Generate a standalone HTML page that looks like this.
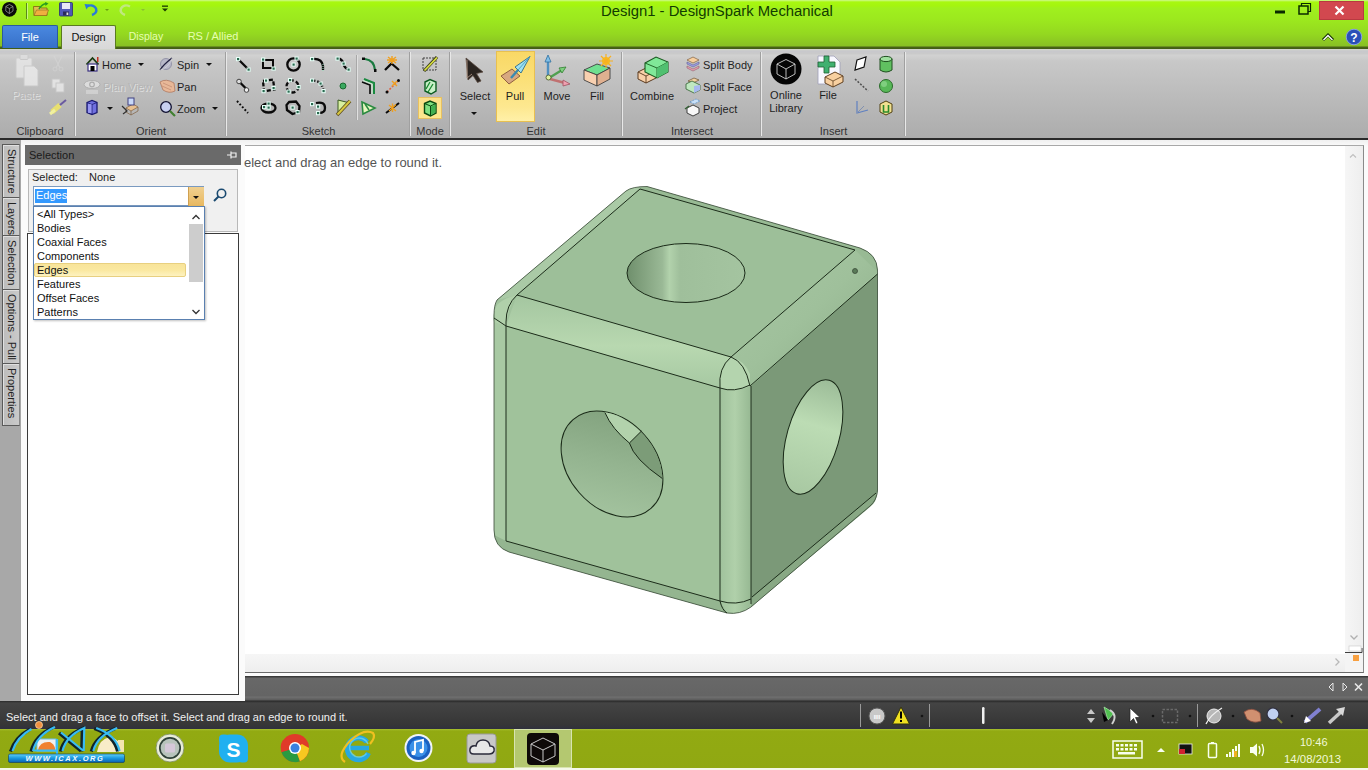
<!DOCTYPE html>
<html><head><meta charset="utf-8">
<style>
*{margin:0;padding:0;box-sizing:border-box}
html,body{width:1368px;height:770px;overflow:hidden;background:#fff;font-family:"Liberation Sans",sans-serif;font-size:11px;color:#1e1e1e}
.a{position:absolute}
.t{position:absolute;white-space:nowrap;line-height:1}
svg{position:absolute;overflow:visible}
#title{left:0;top:0;width:1368px;height:49px;background:linear-gradient(#d0f890 0px,#a8f810 2px,#a4f410 6px,#a0f01e 8px,#9ce81e 20px,#94d820 34px,#88c024 46px,#4a6418 47px,#3e5a14 49px)}
#ribbon{left:0;top:49px;width:1368px;height:90px;background:linear-gradient(#d4d8cc 0,#c8c8cc 2px,#cacaca 5px,#d2d2d2 6px,#c8c8c8 12px,#bcbcbc 45px,#acacac 89px)}
#rline{left:0;top:138px;width:1368px;height:2px;background:#2a2a2a}
#main{left:0;top:140px;width:1368px;height:561px;background:linear-gradient(#f0f0f0 0,#f8f8f8 5px,#fbfbfb 6px,#fbfbfb 100%)}
#ltabs{left:0;top:140px;width:21px;height:561px;background:#a8a8a8}
#panel{left:21px;top:146px;width:224px;height:530px;background:#fbfbfb}
#view{left:245px;top:145px;width:1119px;height:528px;background:#fff;border-top:1px solid #a8a8a8;border-right:1px solid #8a8a8a;border-bottom:1px solid #6a6a6a}
#dpanel{left:245px;top:676px;width:1123px;height:25px;background:linear-gradient(#3a3a3a,#3a3a3a 1px,#686868 2px,#646464 20px,#707070 21px,#5a5a5a 24px,#2a2a2a 25px)}
#status{left:0;top:701px;width:1368px;height:28px;background:linear-gradient(#2a2a2a,#444 2px,#3e3e3e 40%,#363636 85%,#30303e 100%)}
#task{left:0;top:729px;width:1368px;height:41px;background:linear-gradient(#a8c030,#92aa12 2px,#90a812)}
.sep{position:absolute;top:52px;width:2px;height:84px;border-left:1px solid #a0a0a0;border-right:1px solid #e8e8e8}
.gl{position:absolute;top:125px;font-size:11px;color:#333;text-align:center;white-space:nowrap;line-height:13px}
.tab{position:absolute;top:25px;height:23px;font-size:11px;line-height:23px;text-align:center}
.ltab{position:absolute;left:2px;width:18px;background:linear-gradient(90deg,#bcbcbc,#cacaca);border:1px solid #5a5a5a;border-right:1px solid #888;box-shadow:inset 1px 1px 0 #e0e0e0}
.ltab span{position:absolute;left:2px;top:4px;writing-mode:vertical-rl;font-size:11px;line-height:13px;color:#222;white-space:nowrap}
.dd{position:absolute;width:0;height:0;border-left:3px solid transparent;border-right:3px solid transparent;border-top:3px solid #111}
</style></head><body>
<div id="title" class="a"></div>
<div id="ribbon" class="a"></div>
<div id="rline" class="a"></div>
<div id="main" class="a"></div>
<div id="ltabs" class="a"></div>
<div id="panel" class="a"></div>
<div id="view" class="a"></div>
<div id="dpanel" class="a"></div>
<div id="status" class="a"></div>
<div id="task" class="a"></div>

<!-- TITLE -->
<div class="t" style="left:601px;top:3.5px;font-size:14.85px;color:#123c00;line-height:15px">Design1 - DesignSpark Mechanical</div>

<!-- QAT icons -->
<svg style="left:0;top:0" width="180" height="24">
 <circle cx="9.4" cy="9.3" r="7.4" fill="#0a0a0a"/>
 <g stroke="#bbb" stroke-width="0.6" fill="none"><path d="M9.4 4.5 L13 6.5 L13 11 L9.4 13.5 L5.8 11 L5.8 6.5 Z M9.4 8.5 L9.4 13.5 M9.4 8.5 L13 6.5 M9.4 8.5 L5.8 6.5"/></g>
 <line x1="26.5" y1="3" x2="26.5" y2="19" stroke="#5a8a18" stroke-width="1"/>
 <line x1="27.5" y1="3" x2="27.5" y2="19" stroke="#c8f880" stroke-width="1"/>
 <path d="M33.5 6.5 L40 6.5 L41 8 L47 8 L47 15.5 L34 15.5 Z" fill="#e0c050" stroke="#806010" stroke-width="0.8"/>
 <path d="M34 15.5 L36.5 10 L48.5 10 L46.5 15.5 Z" fill="#f0b040" stroke="#906818" stroke-width="0.6"/>
 <path d="M39 9 Q42 4 46.5 3.5" stroke="#2a9a20" stroke-width="1.6" fill="none"/>
 <path d="M45 2 L48.5 3.5 L45.5 6" fill="#2a9a20"/>
 <rect x="59.5" y="2.5" width="13" height="13.5" rx="1" fill="#5058b8" stroke="#2a3070" stroke-width="0.8"/>
 <rect x="62" y="3" width="8" height="6" fill="#e8e8f8"/>
 <rect x="63" y="11.5" width="6" height="4" fill="#2a2a5a"/>
 <rect x="66.5" y="12.5" width="1.8" height="2.5" fill="#ddd"/>
 <path d="M87 6.5 Q93 3.5 96 8.5 Q97.5 13 92 15" stroke="#2a7ad8" stroke-width="2.4" fill="none"/>
 <path d="M84.5 4 L89.5 4.5 L86.5 9.5 Z" fill="#2a7ad8"/>
 <path d="M105 9 L109 9 L107 11 Z" fill="#6aa010"/>
 <path d="M130 6.5 Q124 3.5 121 8.5 Q119.5 13 125 15" stroke="#c0e880" stroke-width="2.4" fill="none"/>
 <path d="M141 9 L145 9 L143 11 Z" fill="#8ac030"/>
 <rect x="162" y="5.5" width="6" height="1.3" fill="#1a3a00"/>
 <path d="M162 8.5 L168 8.5 L165 11.5 Z" fill="#1a3a00"/>
</svg>
<!-- window buttons -->
<div class="a" style="left:1319px;top:1px;width:45px;height:19px;background:#d2484f;border:1px solid #b83a40"></div>
<svg style="left:1270px;top:0" width="98" height="50">
 <rect x="5" y="10.5" width="10" height="3" fill="#0a2a00"/>
 <rect x="29" y="6" width="9" height="8" fill="none" stroke="#0a2a00" stroke-width="1.5"/>
 <path d="M31.5 6 L31.5 3.5 L40.5 3.5 L40.5 11.5 L38 11.5" fill="none" stroke="#0a2a00" stroke-width="1.2"/>
 <path d="M65.5 6.5 L73.5 14.5 M73.5 6.5 L65.5 14.5" stroke="#fff" stroke-width="2.2"/>
 <path d="M53 40 L58 35 L63 40" fill="none" stroke="#123000" stroke-width="3"/>
 <path d="M53.5 40 L58 35.5 L62.5 40" fill="none" stroke="#fff" stroke-width="1.4"/>
 <circle cx="84" cy="37" r="7.8" fill="#2a50b8" stroke="#8aa0e0" stroke-width="1"/>
 <text x="84" y="41.5" font-family="Liberation Sans" font-weight="bold" font-size="12" fill="#fff" text-anchor="middle">?</text>
</svg>
<!-- TABS -->
<div class="tab" style="left:2px;width:56px;background:linear-gradient(#4a88e0,#3670c8);color:#fff;border:1px solid #2a5aa0;border-bottom:none;border-radius:2px 2px 0 0">File</div>
<div class="tab" style="left:61px;width:55px;height:24px;background:linear-gradient(#e4e4e4,#d8d8d8);color:#111;border:1px solid #5a7a20;border-bottom:none;border-radius:2px 2px 0 0">Design</div>
<div class="tab" style="left:118px;width:56px;color:#e6ffb0;font-size:10.5px">Display</div>
<div class="tab" style="left:182px;width:62px;color:#e6ffb0">RS / Allied</div>

<div class="a" style="left:496px;top:51px;width:39px;height:71px;background:linear-gradient(#f9d866,#fbe078 40%,#fde890 80%,#fff0a8);border:1px solid #e8c050"></div>
<div class="a" style="left:418px;top:97px;width:24px;height:22px;background:linear-gradient(#fbe08a,#fde88e);border:1px solid #e8c060"></div>
<!-- RIBBON separators -->
<div class="sep" style="left:74px"></div>
<div class="sep" style="left:225px"></div>
<div class="sep" style="left:409px"></div>
<div class="sep" style="left:449px"></div>
<div class="sep" style="left:621px"></div>
<div class="sep" style="left:760px"></div>
<div class="sep" style="left:904px"></div>
<!-- group labels -->
<div class="gl" style="left:0;width:80px">Clipboard</div>
<div class="gl" style="left:76px;width:150px">Orient</div>
<div class="gl" style="left:227px;width:183px">Sketch</div>
<div class="gl" style="left:411px;width:38px">Mode</div>
<div class="gl" style="left:451px;width:170px">Edit</div>
<div class="gl" style="left:623px;width:138px">Intersect</div>
<div class="gl" style="left:762px;width:143px">Insert</div>


<svg style="left:0;top:0" width="910" height="140">
<!-- sub separator -->
<line x1="356.5" y1="55" x2="356.5" y2="120" stroke="#a8a8a8"/><line x1="357.5" y1="55" x2="357.5" y2="120" stroke="#e0e0e0"/>
<!-- clipboard (faded) -->
<g opacity="0.55">
<rect x="16" y="58" width="16" height="20" rx="1" fill="#f8f8f8" stroke="#d0d0d0"/>
<rect x="20" y="54.5" width="8" height="5" rx="1" fill="#e8e8e8" stroke="#c8c8c8"/>
<path d="M24 66 L34 66 L38 70 L38 86 L24 86 Z" fill="#ffffff" stroke="#d0d0d0"/>
<path d="M54 56 L60 68 M62 56 L56 68" stroke="#d8d8d8" stroke-width="1.2"/><circle cx="55" cy="69" r="2" fill="none" stroke="#d8d8d8"/><circle cx="61" cy="69" r="2" fill="none" stroke="#d8d8d8"/>
<rect x="52" y="79" width="8" height="9" fill="#fff" stroke="#d0d0d0"/><rect x="56" y="83" width="8" height="9" fill="#fff" stroke="#d0d0d0"/>
</g>
<path d="M52 112 L60 105" stroke="#e8e070" stroke-width="5"/><path d="M60 105 L66 100" stroke="#6a5aa0" stroke-width="2"/><path d="M50 114 L55 110" stroke="#f0f0a0" stroke-width="3"/>
<!-- Orient -->
<path d="M86.5 64.5 L92.5 58 L98.5 64.5" fill="none" stroke="#1a3a10" stroke-width="1.8"/>
<rect x="97" y="57" width="1.5" height="5" fill="#c03020"/>
<rect x="88" y="64" width="9" height="7" fill="#fff" stroke="#3a3080" stroke-width="1.2"/>
<rect x="90.5" y="66" width="4" height="5" fill="#000"/>
<circle cx="166" cy="64" r="5.5" fill="#b8b8c8" stroke="#8888a0" stroke-width="0.8"/>
<path d="M160 70 Q163 65 172 58" stroke="#202040" stroke-width="1.3" fill="none"/><path d="M160 70 Q169 68 172 58" stroke="#e8e8f0" stroke-width="0.8" fill="none" opacity=".6"/>
<g opacity="0.6"><ellipse cx="92" cy="84.5" rx="8" ry="4" fill="#f0f0f0" stroke="#a8a8a8" stroke-width="1"/><circle cx="92" cy="84.5" r="2.3" fill="none" stroke="#a0a0a0" stroke-width="1.2"/><rect x="86" y="90" width="12" height="4" fill="#ddd"/></g>
<path d="M160 82 Q166 78 174 83 L175 91 Q169 94 163 90 Z" fill="#e8b898" stroke="#b07860" stroke-width="0.8"/><path d="M163 83 L172 87 M162 86 L171 90" stroke="#c08870" stroke-width="0.7"/>
<path d="M87 102.5 L92 100.5 L97 102.5 L97 112.5 L92 114.5 L87 112.5 Z" fill="#7070e0" stroke="#1a1a70" stroke-width="1.3"/><path d="M87 102.5 L92 104.5 L97 102.5 M92 104.5 L92 114.5" stroke="#1a1a70" stroke-width="0.8" fill="none"/><rect x="88" y="104" width="3.5" height="9" fill="#a8a8f8" opacity=".7"/>
<path d="M126 108 L133 104 L138 107 L131 111 Z" fill="#e8c090" stroke="#806040" stroke-width=".7"/><path d="M126 108 L126 112 L131 115 L131 111 M131 115 L138 111 L138 107" fill="none" stroke="#806040" stroke-width=".7"/><rect x="128" y="98" width="6" height="7" fill="#c8d8f8" stroke="#404080" stroke-width="1"/><path d="M122 106 L127 111 L123 114" fill="none" stroke="#303030" stroke-width="1.2"/>
<circle cx="166" cy="107" r="5.3" fill="#c8d0f0" stroke="#101030" stroke-width="1.3"/><path d="M170 111 L175 116" stroke="#408030" stroke-width="2.2"/>
<!-- sketch -->
<path d="M238 59 L248.5 69.5" stroke="#0a0a0a" stroke-width="2.3"/><rect x="236.5" y="57.5" width="3.2" height="3.2" fill="#2a6a50" stroke="#e8fff8" stroke-width="1"/><rect x="247.0" y="68.0" width="3.2" height="3.2" fill="#2a6a50" stroke="#e8fff8" stroke-width="1"/><rect x="263" y="60" width="10" height="8" fill="none" stroke="#0a0a0a" stroke-width="2"/><rect x="261.5" y="58.0" width="3.2" height="3.2" fill="#2a6a50" stroke="#e8fff8" stroke-width="1"/><rect x="272.0" y="67.0" width="3.2" height="3.2" fill="#2a6a50" stroke="#e8fff8" stroke-width="1"/><circle cx="293.5" cy="64.5" r="6.2" fill="none" stroke="#0a0a0a" stroke-width="2.3"/><rect x="292.0" y="63.0" width="3.2" height="3.2" fill="#2a6a50" stroke="#e8fff8" stroke-width="1"/><rect x="295.0" y="57.0" width="3.2" height="3.2" fill="#2a6a50" stroke="#e8fff8" stroke-width="1"/><path d="M312 59 Q322 58 323 66 L323 70" stroke="#0a0a0a" stroke-width="2.3" fill="none"/><path d="M323 64 L323 71" stroke="#9be0c0" stroke-width="1" stroke-dasharray="1 1"/><rect x="310.5" y="57.5" width="3.2" height="3.2" fill="#2a6a50" stroke="#e8fff8" stroke-width="1"/><path d="M338 58.5 Q342 59 343.5 63.5 Q344 68 349 69.5" stroke="#0a0a0a" stroke-width="2.3" fill="none"/><rect x="336.0" y="57.0" width="3.2" height="3.2" fill="#2a6a50" stroke="#e8fff8" stroke-width="1"/><rect x="342.0" y="62.0" width="3.2" height="3.2" fill="#2a6a50" stroke="#e8fff8" stroke-width="1"/><rect x="347.0" y="68.0" width="3.2" height="3.2" fill="#2a6a50" stroke="#e8fff8" stroke-width="1"/><path d="M365 59 Q374 60 375 70" stroke="#1a7a40" stroke-width="2.2" fill="none"/><rect x="362" y="57.5" width="3" height="2.5" fill="#0a0a0a"/><rect x="374" y="69" width="2.5" height="3" fill="#0a0a0a"/><path d="M385 70 L391.5 63.5 L399 70" stroke="#0a0a0a" stroke-width="2.3" fill="none"/><path d="M388 57 L396 63 M396 57 L388 63 M392 56 L392 64 M387 60 L397 60" stroke="#f0a020" stroke-width="1.4"/><path d="M239.5 82 L247 89.5" stroke="#0a0a0a" stroke-width="2.3"/><circle cx="239" cy="81.5" r="2.3" fill="#ddd" stroke="#444" stroke-width="1"/><circle cx="246.5" cy="90" r="2.3" fill="#eee" stroke="#444" stroke-width="1"/><path d="M263 81 L273 79.5 L274.5 89.5 L264 91.5 Z" fill="none" stroke="#0a0a0a" stroke-width="2.3" stroke-dasharray="4 2"/><rect x="264.5" y="79.0" width="3.2" height="3.2" fill="#2a6a50" stroke="#e8fff8" stroke-width="1"/><rect x="272.0" y="86.5" width="3.2" height="3.2" fill="#2a6a50" stroke="#e8fff8" stroke-width="1"/><rect x="262.0" y="89.5" width="3.2" height="3.2" fill="#2a6a50" stroke="#e8fff8" stroke-width="1"/><circle cx="292.5" cy="86.5" r="6" fill="none" stroke="#0a0a0a" stroke-width="2.3" stroke-dasharray="4 2.2"/><rect x="288.5" y="78.5" width="3.2" height="3.2" fill="#2a6a50" stroke="#e8fff8" stroke-width="1"/><rect x="297.0" y="85.5" width="3.2" height="3.2" fill="#2a6a50" stroke="#e8fff8" stroke-width="1"/><rect x="287.0" y="90.0" width="3.2" height="3.2" fill="#2a6a50" stroke="#e8fff8" stroke-width="1"/><path d="M312 80.5 Q320 81 321 84 Q323 87 323.5 91" stroke="#0a0a0a" stroke-width="2.3" fill="none" stroke-dasharray="3 2"/><rect x="310.5" y="79.0" width="3.2" height="3.2" fill="#2a6a50" stroke="#e8fff8" stroke-width="1"/><rect x="319.0" y="82.0" width="3.2" height="3.2" fill="#2a6a50" stroke="#e8fff8" stroke-width="1"/><rect x="322.0" y="89.5" width="3.2" height="3.2" fill="#2a6a50" stroke="#e8fff8" stroke-width="1"/><circle cx="343" cy="86" r="3" fill="#3aa860" stroke="#1a6a30" stroke-width="1"/><path d="M362 82 L370 85 L370 94" stroke="#0a0a0a" stroke-width="1.6" fill="none"/><path d="M364 79 L374 83 L374 94" stroke="#1a8a40" stroke-width="2" fill="none"/><path d="M363 80.5 L372 84 L372 94" stroke="#c8f0d0" stroke-width="1" fill="none"/><path d="M387 92 L399 80" stroke="#e06040" stroke-width="1.6" stroke-dasharray="2 1.5"/><circle cx="387" cy="92" r="1.5" fill="#0a0a0a"/><circle cx="398.5" cy="80.5" r="1.5" fill="#0a0a0a"/><path d="M392 81 L397 86 M397 81 L392 86" stroke="#f0a020" stroke-width="1.4"/><path d="M237 101 L248 113" stroke="#0a0a0a" stroke-width="2" stroke-dasharray="1.8 2"/><ellipse cx="268.5" cy="108" rx="7" ry="4.5" fill="none" stroke="#0a0a0a" stroke-width="2.3"/><rect x="262.5" y="105.5" width="3.2" height="3.2" fill="#2a6a50" stroke="#e8fff8" stroke-width="1"/><rect x="267.0" y="102.0" width="3.2" height="3.2" fill="#2a6a50" stroke="#e8fff8" stroke-width="1"/><rect x="267.0" y="106.0" width="3.2" height="3.2" fill="#2a6a50" stroke="#e8fff8" stroke-width="1"/><path d="M289 102 L296 101.5 L299.5 106 L299 112 L292.5 114 L287 110 L286.5 105 Z" fill="none" stroke="#0a0a0a" stroke-width="2.3"/><rect x="291.0" y="106.0" width="3.2" height="3.2" fill="#2a6a50" stroke="#e8fff8" stroke-width="1"/><rect x="296.0" y="110.5" width="3.2" height="3.2" fill="#2a6a50" stroke="#e8fff8" stroke-width="1"/><path d="M316 103 Q325 101 325 108 Q325 113 319 113" stroke="#0a0a0a" stroke-width="2.3" fill="none"/><rect x="310.5" y="102.5" width="3.2" height="3.2" fill="#2a6a50" stroke="#e8fff8" stroke-width="1"/><rect x="316.5" y="105.0" width="3.2" height="3.2" fill="#2a6a50" stroke="#e8fff8" stroke-width="1"/><rect x="316.5" y="111.5" width="3.2" height="3.2" fill="#2a6a50" stroke="#e8fff8" stroke-width="1"/><path d="M338 100 L338 114 L350 103 Z" fill="#d8f0a0" stroke="#3a5a20" stroke-width="1"/><path d="M337 115 L350 101" stroke="#5a4a20" stroke-width="3.5"/><path d="M337.5 114.5 L350 101" stroke="#d8c840" stroke-width="2"/><path d="M362 102 L375 108 L363 114 Z" fill="#e8f8c0" stroke="#2a8a40" stroke-width="1.6"/><path d="M365 104 L369 110" stroke="#2a8a40" stroke-width="1.5"/><path d="M386 113 L399 103" stroke="#0a0a0a" stroke-width="2"/><path d="M389 105 L396 111 M396 104.5 L389 111 M392.5 103.5 L392.5 112" stroke="#f0a020" stroke-width="1.4"/>
<!-- mode -->
<rect x="423" y="58" width="13" height="12" fill="none" stroke="#404040" stroke-width="1" stroke-dasharray="2 1"/><path d="M424 71 L437 57" stroke="#3a3a1a" stroke-width="3.2"/><path d="M424.5 70.5 L437 57.5" stroke="#d8e040" stroke-width="1.8"/>
<path d="M425 82 L430 79.5 L436 82 L436 91 L431 94 L425 91 Z" fill="#c8f0c8" stroke="#0a5a20" stroke-width="1.4"/><path d="M426 89 L430 82 M428 92 L433 84" stroke="#1a8a30" stroke-width="1.3"/>
<path d="M424.5 103.5 L430 101 L436 103.5 L436 113 L430.5 116 L424.5 113 Z" fill="#80e080" stroke="#0a4a10" stroke-width="1.4"/><path d="M424.5 103.5 L430.5 106 L436 103.5 M430.5 106 L430.5 116" stroke="#0a4a10" stroke-width="1" fill="none"/><path d="M431 106.5 L435.5 104.5 L435.5 112.5 L431 115 Z" fill="#40b050"/>
<!-- Edit: select -->
<path d="M466 58 L483 72 L476.5 73.5 L481 81 L477.5 82.5 L473 75.5 L468 80 Z" fill="#2a2420" stroke="#5a4a40" stroke-width="0.8"/><path d="M467 60 L467 78 L472 74" fill="none" stroke="#a89080" stroke-width=".9"/>
<!-- pull -->
<path d="M501 76 L512 69 L520 76 L509 84 Z" fill="#d8a880" stroke="#906040" stroke-width="1"/>
<path d="M511 78 L518 70" stroke="#3a8ab0" stroke-width="2.4"/><path d="M515 67 L530 56.5 L521 73 Z" fill="#a0e0f0" stroke="#2a6a8a" stroke-width=".9"/><path d="M518 70 L530 56.5" stroke="#50a8c8" stroke-width="1"/>
<!-- move -->
<path d="M548 60 L548 76" stroke="#5090c0" stroke-width="2.4"/><path d="M545 62 L548 55 L551 62 Z" fill="#80c0e8" stroke="#3070a0" stroke-width=".8"/>
<path d="M549 78 L562 70" stroke="#50a050" stroke-width="2.4"/><path d="M559 68 L566 67 L562 73 Z" fill="#80d080" stroke="#308030" stroke-width=".8"/>
<path d="M550 79 L565 83" stroke="#c07070" stroke-width="2.4"/><path d="M563 80 L570 84 L563 86 Z" fill="#f0a0b0" stroke="#a05060" stroke-width=".8"/>
<circle cx="548.5" cy="77.5" r="2.5" fill="#e0f0a0" stroke="#405020" stroke-width=".8"/>
<!-- fill -->
<path d="M584 70 L597 64 L610 68 L597 75 Z" fill="#70e090" stroke="#404040" stroke-width=".9"/>
<path d="M584 70 L584 80 L597 86 L597 75 Z" fill="#f8d0b0" stroke="#404040" stroke-width=".9"/>
<path d="M597 75 L610 68 L610 79 L597 86 Z" fill="#e0b090" stroke="#404040" stroke-width=".9"/>
<circle cx="606" cy="61" r="4" fill="#f8c020"/><path d="M606 54 L606 68 M599 61 L613 61 M601 56 L611 66 M611 56 L601 66" stroke="#f8b020" stroke-width="1.2"/>
<!-- combine -->
<path d="M638 72 L648 67 L656 71 L656 78 L646 83 L638 79 Z" fill="#f8d0a8" stroke="#5a3a20" stroke-width="1"/>
<path d="M638 72 L646 76 L656 71 M646 76 L646 83" fill="none" stroke="#5a3a20" stroke-width=".9"/>
<path d="M645 63 L656 57 L668 62 L668 72 L657 78 L645 72 Z" fill="#80e898" stroke="#1a5a20" stroke-width="1.1"/>
<path d="M645 63 L657 68 L668 62 M657 68 L657 78" fill="none" stroke="#1a5a20" stroke-width=".9"/><path d="M657 68 L668 62 L668 72 L657 78 Z" fill="#50c070"/>
<!-- split body / face / project -->
<path d="M687 60 L693 57 L699 60 L693 63 Z" fill="#f8d0a0" stroke="#806040" stroke-width=".7"/><path d="M687 62 L693 65 L699 62 L699 64 L693 67 L687 64 Z" fill="#a0a0e8" stroke="#606090" stroke-width=".6"/><path d="M687 66 L693 69 L699 66 L699 68 L693 71 L687 68 Z" fill="#e8a0b0" stroke="#906070" stroke-width=".6"/>
<path d="M688 81 L694 78 L699 80 L693 83 Z" fill="#f0d0a0" stroke="#6a5030" stroke-width=".7"/><path d="M686 84 L692 81 L700 85 L700 90 L694 93 L686 89 Z" fill="#c0e8c0" stroke="#306030" stroke-width=".8"/><path d="M694 86 L700 85 L700 90 L694 93 Z" fill="#a8b8f0"/>
<path d="M690 102 L696 99 L700 101 L694 104 Z" fill="#c8e0f8" stroke="#4080c0" stroke-width=".7" stroke-dasharray="1 .8"/><path d="M687 108 L693 105 L699 108 L699 113 L693 116 L687 113 Z" fill="#f8f8f8" stroke="#303030" stroke-width=".9"/><path d="M685 109 L689 106" stroke="#306030" stroke-width="1.2"/>
<!-- online library -->
<circle cx="786" cy="69" r="15.5" fill="#050505"/>
<g stroke="#e8e8e8" stroke-width=".8" fill="none"><path d="M786 59.5 L795 64 L795 74 L786 79 L777 74 L777 64 Z M777 64 L786 69 L795 64 M786 69 L786 79"/></g>
<!-- file insert -->
<path d="M818 56 L834 56 L840 62 L840 84 L818 84 Z" fill="#f8f8ff" stroke="#a0a0b8" stroke-width=".8"/>
<path d="M818 62 L824 62 L824 56 L829 56 L829 62 L835 62 L835 67 L829 67 L829 73 L824 73 L824 67 L818 67 Z" fill="#40b070" stroke="#206030" stroke-width=".8"/>
<path d="M825 77 L835 72 L843 76 L843 82 L833 87 L825 83 Z" fill="#f8d0a0" stroke="#604020" stroke-width="1"/><path d="M825 77 L833 81 L843 76 M833 81 L833 87" fill="none" stroke="#604020" stroke-width=".8"/>
<!-- insert small -->
<path d="M857 60 L866 57 L864 67 L855 70 Z" fill="#fff" stroke="#101010" stroke-width="1.2"/>
<path d="M855 79 L868 91" stroke="#505050" stroke-width="1.5" stroke-dasharray="2 1.5"/>
<path d="M857 101 L857 113 L868 110" fill="none" stroke="#6080c0" stroke-width="1.2"/><path d="M857 113 L864 106" stroke="#8090b0" stroke-width="1"/>
<path d="M880 59 L880 70 Q886 74 892 70 L892 59" fill="#60c060" stroke="#205020" stroke-width="1"/><ellipse cx="886" cy="59" rx="6" ry="2.6" fill="#a0e0a0" stroke="#205020" stroke-width="1"/>
<circle cx="886" cy="86" r="6.5" fill="#58b858" stroke="#2a6a2a" stroke-width="1"/><circle cx="884" cy="84" r="3" fill="#90d890" opacity=".7"/>
<path d="M880 104 L886 101 L892 104 L892 112 L886 115 L880 112 Z" fill="#f0e090" stroke="#504010" stroke-width="1"/><path d="M883.5 105 L883.5 112 L888.5 112 L888.5 105" fill="none" stroke="#2a8a2a" stroke-width="1.6"/>
</svg>
<!-- Orient texts -->
<div class="t" style="left:102px;top:59.5px">Home</div>
<div class="t" style="left:177px;top:59.5px">Spin</div>
<div class="t" style="left:103px;top:81.5px;color:#b4b4b4;text-shadow:1px 1px 0 #e0e0e0">Plan View</div>
<div class="t" style="left:177px;top:81.5px">Pan</div>
<div class="t" style="left:177px;top:103.5px">Zoom</div>
<div class="t" style="left:12px;top:90px;color:#b8b8b8;text-shadow:1px 1px 0 #e0e0e0">Paste</div>
<div class="dd" style="left:138px;top:63px"></div>
<div class="dd" style="left:206px;top:63px"></div>
<div class="dd" style="left:107px;top:107px"></div>
<div class="dd" style="left:212px;top:107px"></div>

<!-- Edit texts -->
<div class="t" style="left:458px;top:91px;width:34px;text-align:center">Select</div>
<div class="dd" style="left:471px;top:112px"></div>
<div class="t" style="left:500px;top:91px;width:30px;text-align:center">Pull</div>
<div class="t" style="left:540px;top:91px;width:34px;text-align:center">Move</div>
<div class="t" style="left:585px;top:91px;width:24px;text-align:center">Fill</div>
<!-- Intersect texts -->
<div class="t" style="left:630px;top:91px">Combine</div>
<div class="t" style="left:703px;top:59.5px">Split Body</div>
<div class="t" style="left:703px;top:81.5px">Split Face</div>
<div class="t" style="left:703px;top:103.5px">Project</div>
<!-- Insert texts -->
<div class="t" style="left:766px;top:89px;width:40px;text-align:center;line-height:13px">Online<br>Library</div>
<div class="t" style="left:816px;top:90px;width:24px;text-align:center">File</div>
<!-- Mode highlight -->

<!-- LEFT TABS -->
<div class="ltab" style="top:144px;height:54px"><span>Structure</span></div>
<div class="ltab" style="top:197px;height:39px"><span>Layers</span></div>
<div class="ltab" style="top:235px;height:55px"><span>Selection</span></div>
<div class="ltab" style="top:289px;height:75px"><span>Options - Pull</span></div>
<div class="ltab" style="top:363px;height:63px"><span>Properties</span></div>

<!-- SELECTION PANEL -->
<div class="a" style="left:25px;top:145px;width:216px;height:20px;background:#6a6a6a"></div>
<div class="t" style="left:29px;top:150px;color:#1a1a1a">Selection</div>
<div class="a" style="left:28px;top:169px;width:210px;height:63px;background:#f0f0f0;border:1px solid #b8b8b8"></div>
<div class="t" style="left:32px;top:172px">Selected:</div>
<div class="t" style="left:89px;top:172px">None</div>
<div class="a" style="left:27px;top:233px;width:212px;height:462px;background:#fff;border:1px solid #3a3a3a"></div>
<div class="a" style="left:33px;top:186px;width:171px;height:20px;background:#fff;border:1px solid #7a9ac0"></div>
<div class="a" style="left:188px;top:187px;width:16px;height:19px;background:linear-gradient(#f0d090,#e8b860);border-left:1px solid #d0a050"></div>
<div class="dd" style="left:193px;top:196px"></div>
<div class="a" style="left:35px;top:189px;width:32px;height:14px;background:#3399ff"></div>
<div class="t" style="left:36px;top:190px;color:#fff">Edges</div>

<!-- dropdown list -->
<div class="a" style="left:33px;top:206px;width:172px;height:114px;background:#fff;border:1px solid #5a80b0;box-shadow:1px 1px 2px rgba(0,0,0,.25)"></div>
<div class="a" style="left:189px;top:224px;width:14px;height:58px;background:#cdcdcd"></div>
<div class="a" style="left:34px;top:263px;width:152px;height:14px;background:linear-gradient(#f8e49a,#fae8a0 50%,#fdf2c0);border:1px solid #e8d080;border-radius:2px"></div>
<div class="t" style="left:37px;top:206.5px;line-height:14px;color:#111">&lt;All Types&gt;<br>Bodies<br>Coaxial Faces<br>Components<br>Edges<br>Features<br>Offset Faces<br>Patterns</div>


<svg style="left:0;top:0" width="1368" height="700">
<defs>
 <linearGradient id="gTopHole" x1="0" x2="1" y1="0" y2="0">
  <stop offset="0" stop-color="#6f8f6c"/><stop offset="0.3" stop-color="#9ab996"/><stop offset="0.36" stop-color="#b2d2ac"/><stop offset="0.45" stop-color="#9fbf9b"/><stop offset="1" stop-color="#a4c4a0"/>
 </linearGradient>
 <linearGradient id="gFrontHole" x1="0" x2="1" y1="0" y2="1">
  <stop offset="0" stop-color="#7d9d79"/><stop offset="0.5" stop-color="#94b490"/><stop offset="1" stop-color="#a8c8a3"/>
 </linearGradient>
 <linearGradient id="gRightHole" x1="0" x2="0" y1="0" y2="1">
  <stop offset="0" stop-color="#9cbc98"/><stop offset="0.4" stop-color="#bcdcb4"/><stop offset="1" stop-color="#a8c8a2"/>
 </linearGradient>
 <linearGradient id="gVF" x1="0" x2="1" y1="0" y2="0">
  <stop offset="0" stop-color="#a0c29c"/><stop offset="0.5" stop-color="#b0d0aa"/><stop offset="1" stop-color="#98ba94"/>
 </linearGradient>
 <linearGradient id="gTF" x1="0" x2="0" y1="0" y2="1">
  <stop offset="0" stop-color="#a4c6a0"/><stop offset="0.55" stop-color="#b8d8b0"/><stop offset="1" stop-color="#a6c8a2"/>
 </linearGradient>
<linearGradient id="gTRF" x1="0" y1="0" x2="1" y2="1" gradientUnits="objectBoundingBox">
  <stop offset="0" stop-color="#a8c8a4"/><stop offset="0.5" stop-color="#9fc09b"/><stop offset="1" stop-color="#8aaa86"/>
 </linearGradient>
</defs>
<!-- silhouette -->
<path d="M497,300 L626,191 Q632,186.5 647,186.5 L860,248 Q877,254 877.5,270 L877.5,490 Q877,500 870,506 L751,607 Q740,615 727,613 L509,552 Q494,547 494,530 L494,315 Q494,305 497,300 Z" fill="#a0c29c"/>
<!-- back-left fillet -->
<path d="M497,300 L626,191 Q632,186.5 640,189 L517,295 Z" fill="#aacaa6"/>
<!-- top face -->
<path d="M640,189 L855,250 L731,357 L517,295 Z" fill="#9dbf99"/>
<!-- top-right fillet -->
<path d="M647,186.5 L860,248 Q877,254 877.5,270 L750,386 L731,357 L855,250 L640,189 Z" fill="#98ba94"/>
<path d="M855,250 L877.5,272 L750,386 L731,357 Z" fill="url(#gTRF)"/>
<!-- front-top fillet -->
<path d="M517,295 L731,357 L720,388 L506,326 Z" fill="url(#gTF)"/>
<!-- front face -->
<path d="M506,326 L720,388 L720,601 L506,541 Z" fill="#a0c29b"/>
<!-- left vertical fillet -->
<path d="M494,318 L506,326 L506,541 L494,535 Z" fill="#a8c9a3"/>
<!-- bottom fillet -->
<path d="M506,541 L720,601 L727,613 L509,552 Q498,548 494,535 Z" fill="#94b590"/>
<!-- right vertical fillet -->
<path d="M720,388 L750,386 L750,606 Q740,615 727,613 L720,601 Z" fill="url(#gVF)"/>
<!-- right face -->
<path d="M751,386 L877.5,274 L877.5,492 L751,599 Z" fill="#7b9978"/>
<!-- bottom-right fillet -->
<path d="M751,598 L877.5,491 Q877,502 870,507 L751,607 Z" fill="#88a884"/>
<!-- corner blobs -->
<path d="M731,357 Q744,360 750,374 L750,386 Q738,392 720,388 Q716,372 731,357 Z" fill="#b4d4ae"/>
<path d="M517,295 Q504,298 497,305 Q492,315 494,322 L506,326 Q508,306 517,295 Z" fill="#b0d0aa"/>
<!-- holes -->
<ellipse cx="686" cy="273" rx="59" ry="29.5" fill="url(#gTopHole)" stroke="#1a2a18" stroke-width="1"/>
<g transform="rotate(48.7 612 464)">
 <ellipse cx="612" cy="464" rx="59" ry="43.6" fill="url(#gFrontHole)" stroke="#1a2a18" stroke-width="1"/>
</g>
<clipPath id="cpH"><ellipse cx="612" cy="464" rx="58.5" ry="43.1" transform="rotate(48.7 612 464)"/></clipPath>
<g clip-path="url(#cpH)">
<path d="M600,400 L605,412.7 Q612,429 629.4,443 L645,428 L640,400 Z" fill="#b2d2ac"/>
<path d="M629.4,443 Q634,459 662.3,478.5 L680,480 L670,420 L645,428 Z" fill="#7c9c78"/>
</g>
<path d="M605,412.7 Q612,429 629.4,443 Q634,459 662.3,478.5" fill="none" stroke="#1a2a18" stroke-width="1"/>
<path d="M629.4,443 L641.5,431" fill="none" stroke="#1a2a18" stroke-width="1"/>
<g transform="rotate(16 813 437)">
 <ellipse cx="813" cy="437" rx="26" ry="59" fill="url(#gRightHole)" stroke="#1a2a18" stroke-width="1"/>
</g>
<!-- edge lines -->
<g fill="none" stroke="#1c2c1a" stroke-width="1">
 <path d="M626,191 Q632,186.5 647,186.5 L860,248 Q877,254 877.5,270 L877.5,490 Q877,500 870,506 L751,607 Q740,615 727,613 L509,552 Q494,547 494,530 L494,315 Q494,305 497,300 Z" stroke="#3a4a38" stroke-width="0.8"/>
 <path d="M640,189 L855,250"/>
 <path d="M640,189 L517,295"/>
 <path d="M517,295 L731,357"/>
 <path d="M855,250 L731,357"/>
 <path d="M506,326 L720,388"/>
 <path d="M877.5,274 L750,386"/>
 <path d="M506,322 L506,541"/>
 <path d="M720,388 L720,601"/>
 <path d="M751,386 L751,604"/>
 <path d="M506,541 L720,601"/>
 <path d="M752,597 L876,493"/>
 <path d="M731,357 Q745,362 750,386"/>
 <path d="M720,388 Q718,368 731,357"/>
 <path d="M517,295 Q506,305 506,322"/>
 <path d="M494,318 L506,326"/>
 <path d="M720,601 Q722,610 727,613"/>
 <path d="M720,601 Q736,606 751,599"/>
 <path d="M720,388 Q734,393 750,385"/>
</g>
<circle cx="855" cy="271" r="2.5" fill="#5a7a58" stroke="#3a4a38" stroke-width=".8"/>
</svg>

<svg style="left:0;top:0" width="260" height="330">
 <path d="M227 155 L231 155 M231 151.5 L231 158.5 M231 153 L236 153 L236 157 L231 157" stroke="#f0f0f0" stroke-width="1.2" fill="none"/>
 <circle cx="221.5" cy="193.5" r="4.2" fill="none" stroke="#1a4a70" stroke-width="1.6"/><path d="M218.5 196.5 L214 201" stroke="#1a4a70" stroke-width="2"/>
 <path d="M192.5 219 L196 215.5 L199.5 219" fill="none" stroke="#333" stroke-width="1.3"/>
 <path d="M192.5 310 L196 313.5 L199.5 310" fill="none" stroke="#333" stroke-width="1.3"/>
</svg>
<!-- viewport text -->
<div class="t" style="left:244px;top:156px;font-size:13px;color:#555">elect and drag an edge to round it.</div>

<!-- STATUS -->
<div class="t" style="left:6px;top:712px;color:#f0f0f0">Select and drag a face to offset it. Select and drag an edge to round it.</div>




<!-- viewport scrollbars -->
<div class="a" style="left:1345px;top:146px;width:18px;height:508px;background:linear-gradient(90deg,#f6f6f6,#eeeeee)"></div>
<div class="a" style="left:245px;top:654px;width:1100px;height:18px;background:linear-gradient(#f6f6f6,#eeeeee)"></div>
<div class="a" style="left:1345px;top:654px;width:18px;height:18px;background:#f4f4f4"></div>
<svg style="left:0;top:0" width="1368" height="770">
 <path d="M1350 157.5 L1353 154.5 L1356 157.5" fill="none" stroke="#c0c0c0" stroke-width="1.2"/>
 <path d="M1350.5 635.5 L1354 639 L1357.5 635.5" fill="none" stroke="#b0b0b0" stroke-width="1.3"/>
 <path d="M1335.5 658.5 L1339 662 L1335.5 665.5" fill="none" stroke="#b8b8b8" stroke-width="1.3"/>
 <path d="M1345 652.5 L1362 652.5 L1362 648" fill="none" stroke="#404040" stroke-width="1"/>
 <rect x="1349" y="646" width="12" height="5" fill="#fff" stroke="#c8c8c8" stroke-width=".6"/>
 <rect x="1353" y="655" width="6" height="6" fill="#f8a040"/>
 <!-- dark panel icons -->
 <path d="M1333 683 L1329 687 L1333 691 Z" fill="none" stroke="#e8e8e8" stroke-width="1"/>
 <path d="M1343 683 L1347 687 L1343 691 Z" fill="none" stroke="#e8e8e8" stroke-width="1"/>
 <path d="M1355 683.5 L1362 690.5 M1362 683.5 L1355 690.5" stroke="#e8e8e8" stroke-width="1.6"/>
 <!-- status icons -->
 <line x1="860.5" y1="704" x2="860.5" y2="727" stroke="#9a9a9a" stroke-width="1"/>
 <circle cx="877" cy="716" r="8" fill="#c8c8c8" stroke="#5a5a5a" stroke-width="1"/>
 <text x="877" y="719" font-family="Liberation Sans" font-size="6" font-weight="bold" fill="#fff" text-anchor="middle">IIII</text>
 <path d="M901 707 L909.5 724 L892.5 724 Z" fill="#f0e020" stroke="#303010" stroke-width="1"/>
 <rect x="900" y="711.5" width="2" height="7" fill="#000"/><rect x="900" y="720" width="2" height="2" fill="#000"/>
 <circle cx="922" cy="716" r="1.3" fill="#151515"/>
 <line x1="929.5" y1="704" x2="929.5" y2="727" stroke="#9a9a9a" stroke-width="1"/>
 <rect x="982" y="707" width="2.5" height="17" rx="1.2" fill="#f0f0f0"/>
 <path d="M1087 714 L1091 709 L1095 714 Z" fill="#c8c8c8"/><path d="M1087 718 L1091 723 L1095 718 Z" fill="#c8c8c8"/>
 <path d="M1104 707 L1114 713 L1108 720 Z" fill="#50c050" stroke="#a0e0a0" stroke-width=".8"/><path d="M1110 710 Q1118 715 1112 724" stroke="#d0d0d0" stroke-width="2" fill="none"/><path d="M1102 712 L1104 722 L1108 720" fill="#000"/>
 <path d="M1130 708 L1130 722 L1133.5 718.5 L1136 724 L1138 723 L1135.5 717.5 L1140 717.5 Z" fill="#fff" stroke="#222" stroke-width=".7"/>
 <circle cx="1153" cy="716" r="1.3" fill="#111"/>
 <rect x="1162.5" y="709.5" width="15" height="13" fill="none" stroke="#6a6a6a" stroke-width="1.5" stroke-dasharray="2.5 1.5"/>
 <circle cx="1190" cy="716" r="1.3" fill="#111"/>
 <line x1="1197.5" y1="704" x2="1197.5" y2="727" stroke="#9a9a9a" stroke-width="1"/>
 <circle cx="1214" cy="716" r="7" fill="#b8b8b8" stroke="#eee" stroke-width="1"/><path d="M1206 724 Q1210 715 1222 708" stroke="#f0f0f0" stroke-width="1.3" fill="none"/>
 <circle cx="1233" cy="716" r="1.3" fill="#111"/>
 <path d="M1244 712 Q1252 706 1260 713 L1261 721 Q1253 724 1247 719 Z" fill="#d09070" stroke="#905040" stroke-width=".8"/>
 <circle cx="1273" cy="714" r="6" fill="#c0d0f0" stroke="#303040" stroke-width="1.2"/><path d="M1277 718 L1282 723" stroke="#808040" stroke-width="2"/>
 <circle cx="1292" cy="716" r="1.3" fill="#111"/>
 <path d="M1305 722 L1320 709" stroke="#8080d0" stroke-width="4"/><path d="M1304 723 L1311 721 L1306 716 Z" fill="#fff"/>
 <path d="M1329 723 L1342 711" stroke="#c8c8c8" stroke-width="3.5"/><path d="M1336 709 L1345 707 L1343 716 Z" fill="#d8d8d8"/>
</svg>

<!-- TASKBAR -->
<div class="a" style="left:0;top:768px;width:1368px;height:2px;background:#f4f8e8"></div>
<div class="a" style="left:514px;top:729px;width:58px;height:39px;background:#b4c870;border:1px solid #d8e4b0"></div>
<svg style="left:0;top:0" width="1368" height="770">
 <!-- ICAX logo -->
 <defs><linearGradient id="gBan" x1="0" x2="0" y1="0" y2="1"><stop offset="0" stop-color="#60d0f8"/><stop offset=".5" stop-color="#1a98e0"/><stop offset="1" stop-color="#0a60b0"/></linearGradient></defs>
 <rect x="37" y="739" width="19" height="12" fill="#f0f0f0" stroke="#70c0f0" stroke-width="1"/><path d="M38 750 Q40 741 50 742 Q54 744 55 748 L55 750 Z" fill="#f08030"/>
 <path d="M97 752 Q99 739 110 737 Q121 739 123 752 Z" fill="#f8ecc8"/><rect x="118" y="740" width="6" height="12" fill="#f4e4b0"/>
 <g fill="none" stroke="#10242a" stroke-width="3.2" transform="translate(-2 0.5)">
  <path d="M12.5 751 Q17 737 31.5 729"/><path d="M33 751 Q37 735 55 727"/><path d="M62.5 751 Q66 736 84.3 728 L83.7 751 M61 732.5 L83 750.5"/><path d="M93.3 751 Q97 736 117.2 728"/><path d="M96.2 728 Q116 735 119.6 751"/>
 </g>
 <g fill="none" stroke="#38bcf4" stroke-width="2.2">
  <path d="M12.5 751 Q17 737 31.5 729"/><path d="M33 751 Q37 735 55 727"/><path d="M33.5 750.5 L57 750.5 M57 739 L57 754"/><path d="M62.5 751 Q66 736 84.3 728 L83.7 751 M61 732.5 L83 750.5"/><path d="M93.3 751 Q97 736 117.2 728"/><path d="M96.2 728 Q116 735 119.6 751"/>
 </g>
 <rect x="8.5" y="754" width="116" height="8.5" rx="1.5" fill="url(#gBan)" stroke="#0a3a60" stroke-width=".6"/>
 <text x="65" y="761" font-family="Liberation Sans" font-size="7.5" font-weight="bold" font-style="italic" fill="#f4fcff" text-anchor="middle" letter-spacing="1.6">WWW.ICAX.ORG</text>
 <circle cx="39" cy="725" r="3.5" fill="#f09040" stroke="#f8d0a0" stroke-width=".8"/>
 <!-- grey circle -->
 <circle cx="170" cy="748" r="14" fill="#e8ecd8" stroke="#7a8a60" stroke-width=".8"/><circle cx="170" cy="748" r="11" fill="#2e4038"/><circle cx="170" cy="748" r="9.3" fill="#b8c4bc"/><rect x="165" y="743.5" width="10" height="9" rx="1.5" fill="#d4c8d8"/>
 <!-- skype -->
 <rect x="219" y="734.5" width="29" height="28" rx="11" fill="#20b0f0"/><rect x="219" y="734.5" width="10" height="10" rx="4" fill="#20b0f0"/><rect x="238" y="752" width="10" height="10.5" rx="4" fill="#20b0f0"/>
 <text x="233.5" y="756.5" font-family="Liberation Sans" font-size="21" font-weight="bold" fill="#fff" text-anchor="middle">S</text>
 <!-- chrome -->
 <circle cx="295" cy="748" r="14" fill="#e03a2a"/>
 <path d="M295 748 L281.5 752 A14 14 0 0 0 300 761.2 Z" fill="#2a9a40"/>
 <path d="M295 748 L300 761.2 A14 14 0 0 0 309 748 L302 744 Z" fill="#f8c820"/>
 <path d="M295 748 L281.5 752 A14 14 0 0 1 283 740 L295 740 Z" fill="#e03a2a"/>
 <circle cx="295" cy="748" r="6" fill="#fff"/><circle cx="295" cy="748" r="4.5" fill="#3a80e0"/>
 <!-- IE -->
 <path d="M368.5 753 A11 11 0 1 1 367 742" fill="none" stroke="#28a8e0" stroke-width="5"/>
 <path d="M346 748 L369 748" stroke="#28a8e0" stroke-width="4.5"/>
 <path d="M366.5 753.5 A9.5 9.5 0 1 1 368 744" fill="none" stroke="#70d8f8" stroke-width="1.5" opacity=".7"/>
 <path d="M345 762 Q336 756 350 741 Q364 728 373 733 Q376 737 370 744" fill="none" stroke="#f0c020" stroke-width="2.2"/>
 <!-- itunes -->
 <circle cx="418.5" cy="748" r="14" fill="#f0f4f8"/><circle cx="418.5" cy="748" r="12" fill="#1a60c0"/><circle cx="418.5" cy="748" r="9" fill="#3a90e8"/>
 <path d="M415 753 L415 742 L423 740 L423 751" stroke="#fff" stroke-width="1.8" fill="none"/><circle cx="413.5" cy="753" r="2.2" fill="#fff"/><circle cx="421.5" cy="751" r="2.2" fill="#fff"/>
 <!-- icloud -->
 <rect x="467" y="734" width="29" height="29" rx="3" fill="#c8c8c8" stroke="#9a9a9a" stroke-width="1"/>
 <path d="M474 754 Q469 754 470 749 Q471 745 476 746 Q477 740 483 740 Q489 740 490 746 Q495 746 494 751 Q493 754 489 754 Z" fill="#e8e8e8" stroke="#2a2a3a" stroke-width="1.5"/>
 <!-- designspark -->
 <rect x="527" y="733" width="32" height="32" rx="4" fill="#0e0a08"/>
 <g stroke="#c8c8c8" stroke-width="1" fill="none"><path d="M543 738 L555 744 L555 756 L543 762 L531 756 L531 744 Z M531 744 L543 750 L555 744 M543 750 L543 762"/></g>
 <!-- tray -->
 <rect x="1113" y="741" width="29" height="17" fill="none" stroke="#f8fff0" stroke-width="1.5"/>
 <g fill="#f8fff0"><rect x="1116" y="744" width="3" height="2.5"/><rect x="1120.5" y="744" width="3" height="2.5"/><rect x="1125" y="744" width="3" height="2.5"/><rect x="1129.5" y="744" width="3" height="2.5"/><rect x="1134" y="744" width="3" height="2.5"/>
 <rect x="1116" y="748" width="3" height="2.5"/><rect x="1120.5" y="748" width="3" height="2.5"/><rect x="1125" y="748" width="3" height="2.5"/><rect x="1129.5" y="748" width="3" height="2.5"/><rect x="1134" y="748" width="3" height="2.5"/>
 <rect x="1118" y="752" width="17" height="2.5"/></g>
 <path d="M1157 752 L1161 748 L1165 752 Z" fill="#f8fff0"/>
 <rect x="1179" y="744" width="13" height="10" fill="#111" stroke="#eee" stroke-width=".8"/><rect x="1179" y="749" width="6" height="5" fill="#d02030"/>
 <rect x="1208.5" y="743.5" width="8" height="14" rx="1" fill="none" stroke="#f8fff0" stroke-width="1.5"/><rect x="1211" y="742" width="3" height="1.5" fill="#f8fff0"/>
 <g fill="#f8fff0"><rect x="1226" y="754" width="2" height="3"/><rect x="1229" y="752" width="2" height="5"/><rect x="1232" y="749" width="2" height="8"/><rect x="1235" y="746" width="2" height="11"/><rect x="1238" y="744" width="2" height="13"/></g>
 <rect x="1234" y="751" width="3" height="6" fill="#f0b020"/>
 <path d="M1250 747 L1253 747 L1257 743.5 L1257 756.5 L1253 753 L1250 753 Z" fill="#f8fff0"/>
 <path d="M1259 746 Q1261 750 1259 754 M1262 744 Q1265 750 1262 756" stroke="#f8fff0" stroke-width="1.3" fill="none"/>
</svg>
<div class="t" style="left:1300px;top:737px;font-size:11px;color:#f0f8d8">10:46</div>
<div class="t" style="left:1284px;top:754px;font-size:11.4px;color:#f0f8d8">14/08/2013</div>
</body></html>
